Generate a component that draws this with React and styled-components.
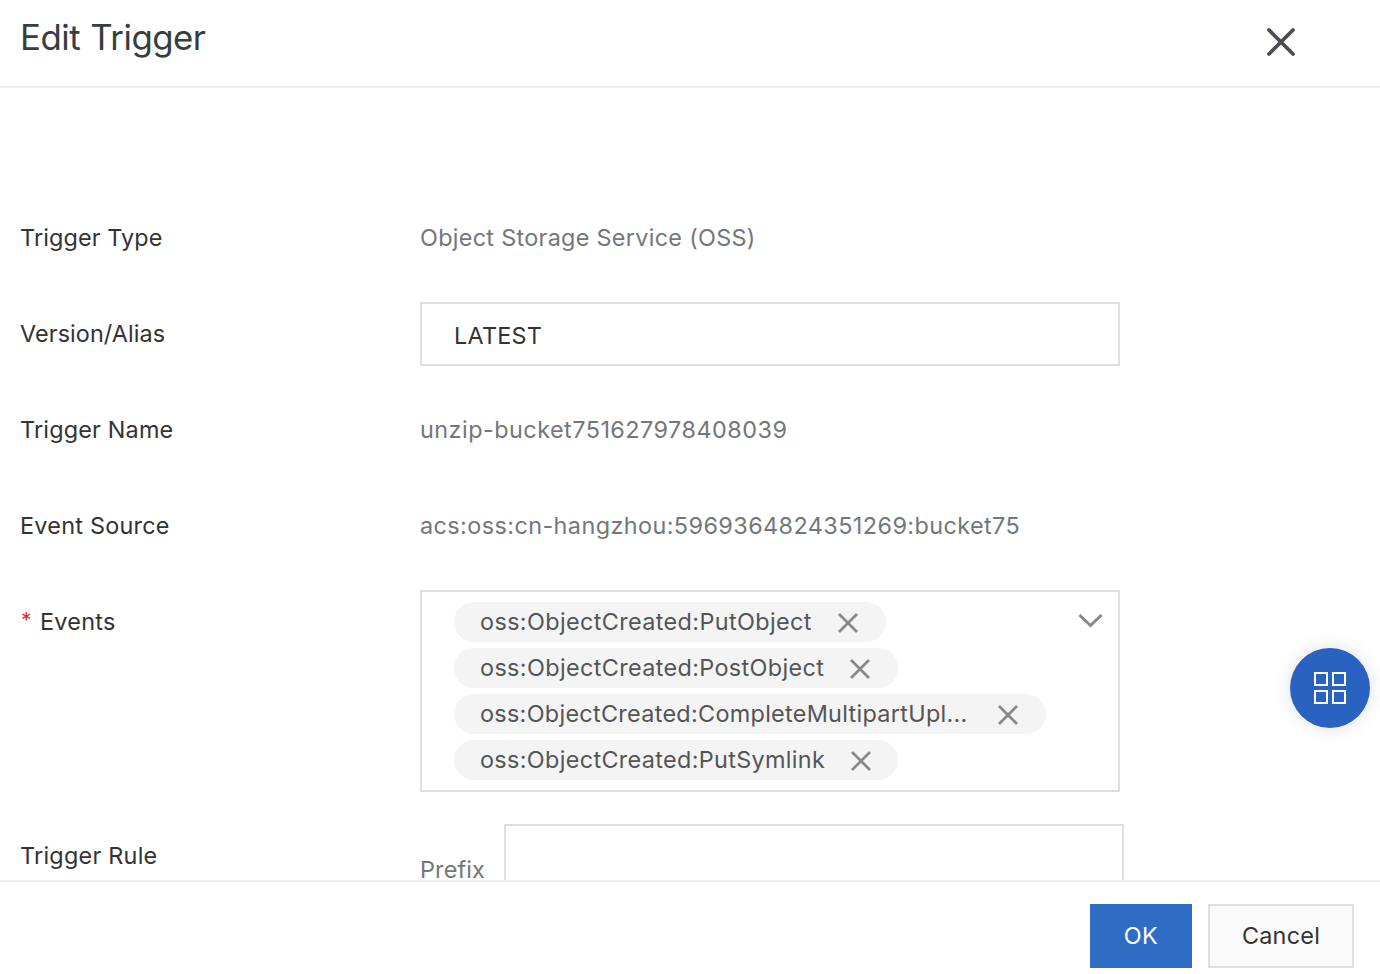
import React from "react";
import styled, { createGlobalStyle } from "styled-components";

const GlobalStyle = createGlobalStyle`
  * { box-sizing: border-box; }
  body {
    margin: 0;
    background: #fff;
    font-family: Inter, "Liberation Sans", sans-serif;
    font-size: 23.4px;
    color: #333;
    overflow: hidden;
  }
`;

const Dialog = styled.div`
  display: flex;
  flex-direction: column;
  width: 1380px;
  height: 974px;
  background: #fff;
`;

const Header = styled.header`
  display: flex;
  justify-content: space-between;
  align-items: flex-start;
  height: 88px;
  padding: 13px 85px 0 20px;
  border-bottom: 2px solid #eee;
`;

const Title = styled.h1`
  margin: 0;
  font-size: 34.8px;
  font-weight: 400;
  line-height: 48px;
  letter-spacing: -0.5px;
  word-spacing: 1px;
  color: #373d41;
`;

const IconButton = styled.button`
  display: flex;
  flex: none;
  padding: 0;
  border: 0;
  background: none;
  color: ${(p) => p.$color};
`;

const CloseButton = styled(IconButton)`
  margin-top: 15px;
`;

const Body = styled.main`
  display: flex;
  flex-direction: column;
  flex: 1;
  gap: 32px;
  min-height: 0;
  padding: 118px 20px 0;
  overflow: hidden;
`;

const Row = styled.div`
  display: flex;
  flex: none;
  align-items: flex-start;
`;

const Text = styled.span`
  line-height: 64px;
  white-space: nowrap;
  letter-spacing: ${(p) => p.$spacing ?? 0.25}px;
`;

const Label = styled(Text)`
  flex: 0 0 400px;
`;

const Value = styled(Text)`
  color: #73777a;
`;

const Required = styled.span`
  display: inline-block;
  width: 20px;
  height: 64px;
  padding-left: 1px;
  font-size: 21px;
  line-height: 62px;
  vertical-align: top;
  color: #d93026;
`;

const SelectBox = styled.div`
  width: 700px;
  height: 64px;
  padding: 2px 32px 0;
  border: 2px solid #dedede;
  line-height: 60px;
`;

const SelectText = styled(Text)`
  line-height: 60px;
`;

const MultiSelect = styled.div`
  display: flex;
  justify-content: space-between;
  align-items: flex-start;
  width: 700px;
  height: 202px;
  padding: 10px 15px 0 32px;
  border: 2px solid #dedede;
`;

const TagList = styled.div`
  display: flex;
  flex-direction: column;
  align-items: flex-start;
  gap: 6px;
`;

const Tag = styled.div`
  display: flex;
  align-items: center;
  justify-content: space-between;
  height: 40px;
  width: ${(p) => p.$width}px;
  padding: 0 ${(p) => p.$end}px 0 26px;
  border-radius: 20px;
  background: #f4f4f4;
`;

const TagText = styled(Text)`
  line-height: 40px;
  color: #555;
`;

const TagRemove = styled(IconButton)`
  margin-top: 2px;
`;

const Chevron = styled(IconButton)`
  margin-top: 11px;
`;

const PrefixLabel = styled(Value)`
  width: 84px;
  padding-top: 14px;
`;

const PrefixInput = styled.input`
  width: 620px;
  height: 64px;
  border: 2px solid #dedede;
  outline: 0;
  background: #fff;
`;

const Footer = styled.footer`
  display: flex;
  justify-content: flex-end;
  gap: 16px;
  height: 94px;
  padding: 22px 26px 0;
  border-top: 2px solid #eee;
`;

const Button = styled.button`
  width: ${(p) => (p.$primary ? 102 : 146)}px;
  height: 64px;
  padding: 0 0 2px;
  border: ${(p) => (p.$primary ? "0" : "2px solid #dedede")};
  background: ${(p) => (p.$primary ? "#2f6dc5" : "#fafafa")};
  color: ${(p) => (p.$primary ? "#fff" : "#333")};
  font: inherit;
  letter-spacing: ${(p) => p.$spacing}px;
`;

const FloatingButton = styled.button`
  position: fixed;
  top: 648px;
  left: 1290px;
  display: flex;
  align-items: center;
  justify-content: center;
  width: 80px;
  height: 80px;
  padding: 0;
  border: 0;
  border-radius: 50%;
  background: #2962c0;
  box-shadow: 0 0 18px rgba(0, 0, 0, 0.13);
`;

const Cross = ({ size, stroke, cap }) => (
  <svg width={size} height={size} viewBox={`0 0 ${size} ${size}`} fill="none" stroke="currentColor" strokeWidth={stroke} strokeLinecap={cap}>
    <path d={`M2 2L${size - 2} ${size - 2}M${size - 2} 2L2 ${size - 2}`} />
  </svg>
);

const events = [
  { name: "oss:ObjectCreated:PutObject", width: 432, end: 27, spacing: 0.38 },
  { name: "oss:ObjectCreated:PostObject", width: 444, end: 27, spacing: 0.37 },
  { name: "oss:ObjectCreated:CompleteMultipartUpl...", width: 592, end: 27, spacing: 0.3 },
  { name: "oss:ObjectCreated:PutSymlink", width: 444, end: 26, spacing: 0.34 },
];

export default function App() {
  return (
    <>
      <GlobalStyle />
      <Dialog>
        <Header>
          <Title>Edit Trigger</Title>
          <CloseButton $color="#4c4e54" aria-label="Close">
            <Cross size={28} stroke={3.8} cap="round" />
          </CloseButton>
        </Header>
        <Body>
          <Row>
            <Label $spacing={0.12}>Trigger Type</Label>
            <Value $spacing={0.3}>Object Storage Service (OSS)</Value>
          </Row>
          <Row>
            <Label $spacing={0.08}>Version/Alias</Label>
            <SelectBox>
              <SelectText>LATEST</SelectText>
            </SelectBox>
          </Row>
          <Row>
            <Label $spacing={0.18}>Trigger Name</Label>
            <Value $spacing={0.48}>unzip-bucket751627978408039</Value>
          </Row>
          <Row>
            <Label>Event Source</Label>
            <Value $spacing={0.42}>acs:oss:cn-hangzhou:5969364824351269:bucket75</Value>
          </Row>
          <Row>
            <Label>
              <Required>*</Required>Events
            </Label>
            <MultiSelect>
              <TagList>
                {events.map((e) => (
                  <Tag key={e.name} $width={e.width} $end={e.end}>
                    <TagText $spacing={e.spacing}>{e.name}</TagText>
                    <TagRemove $color="#888" aria-label="Remove">
                      <Cross size={22} stroke={2.7} cap="butt" />
                    </TagRemove>
                  </Tag>
                ))}
              </TagList>
              <Chevron $color="#888" aria-label="Open">
                <svg width="26" height="16" viewBox="0 0 26 16" fill="none" stroke="currentColor" strokeWidth="3">
                  <path d="M2.5 2L13.5 12.5L24.5 2" />
                </svg>
              </Chevron>
            </MultiSelect>
          </Row>
          <Row>
            <Label>Trigger Rule</Label>
            <PrefixLabel $spacing={0.15}>Prefix</PrefixLabel>
            <PrefixInput aria-label="Prefix" />
          </Row>
        </Body>
        <Footer>
          <Button $primary $spacing={0.5}>OK</Button>
          <Button $spacing={0.25}>Cancel</Button>
        </Footer>
      </Dialog>
      <FloatingButton aria-label="Apps">
        <svg width="32" height="32" viewBox="0 0 32 32" fill="none" stroke="#fff" strokeWidth="2">
          <rect x="1" y="1" width="12" height="12" />
          <rect x="19" y="1" width="12" height="12" />
          <rect x="1" y="19" width="12" height="12" />
          <rect x="19" y="19" width="12" height="12" />
        </svg>
      </FloatingButton>
    </>
  );
}
